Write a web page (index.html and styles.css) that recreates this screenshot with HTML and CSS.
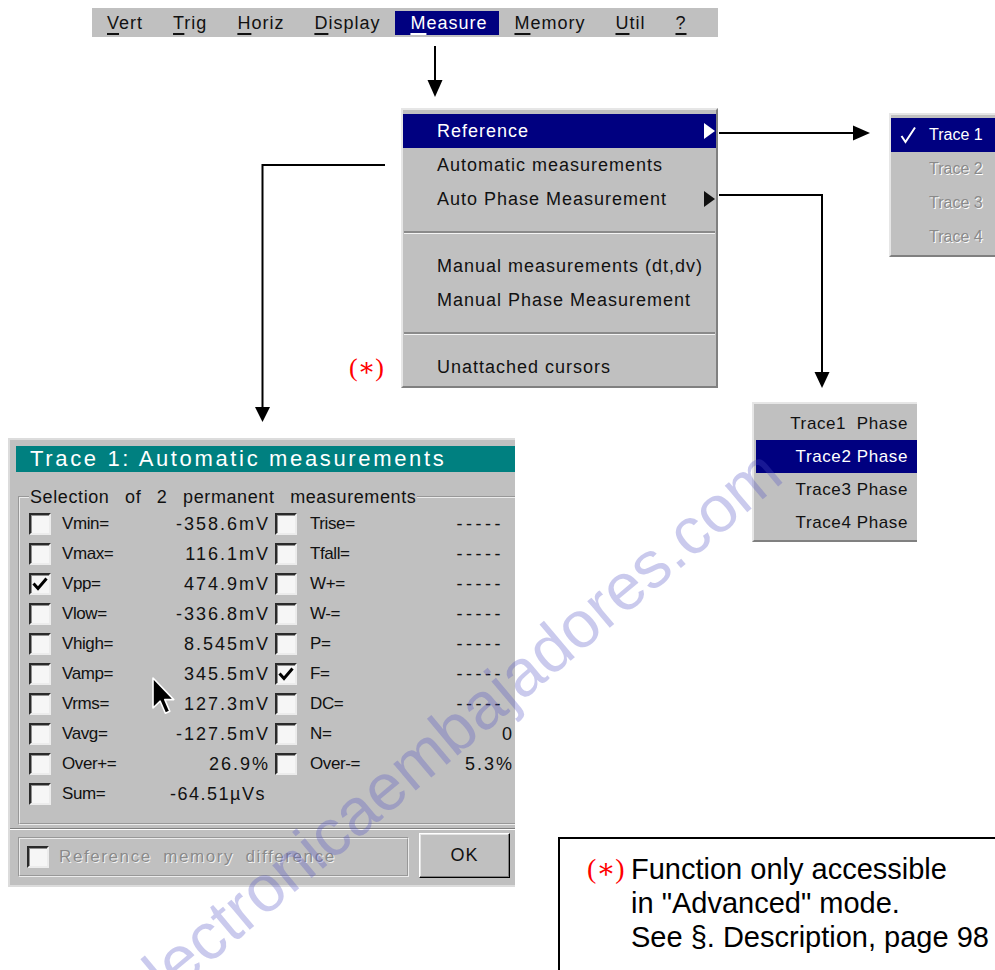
FILE: index.html
```html
<!DOCTYPE html>
<html lang="en">
<head>
<meta charset="utf-8">
<title>Measure menu</title>
<link rel="stylesheet" href="styles.css">
</head>
<body>
<div class="canvas">

  <svg class="wires" width="995" height="970" viewBox="0 0 995 970">
    <g stroke="#000" stroke-width="2" fill="none">
      <path d="M435 46 V82"/>
      <path d="M719 133 H856"/>
      <path d="M719 195 H822 V374"/>
      <path d="M385 165 H262.5 V409"/>
    </g>
    <g fill="#000">
      <polygon points="427.5,80 442.5,80 435,97"/>
      <polygon points="853,125.5 853,140.5 870,133"/>
      <polygon points="814.5,372 829.5,372 822,388"/>
      <polygon points="255,407 270,407 262.5,422"/>
    </g>
  </svg>

  <nav class="menubar">
    <span class="mi"><u>V</u>ert</span>
    <span class="mi"><u>T</u>rig</span>
    <span class="mi"><u>H</u>oriz</span>
    <span class="mi"><u>D</u>isplay</span>
    <span class="mi active"><u>M</u>easure</span>
    <span class="mi"><u>M</u>emory</span>
    <span class="mi"><u>U</u>til</span>
    <span class="mi"><u>?</u></span>
  </nav>

  <div class="dropdown">
    <div class="dd-item sel"><span>Reference</span><span class="tri"></span></div>
    <div class="dd-item"><span>Automatic measurements</span></div>
    <div class="dd-item"><span>Auto Phase Measurement</span><span class="tri"></span></div>
    <div class="dd-sep"></div>
    <div class="dd-item"><span>Manual measurements (dt,dv)</span></div>
    <div class="dd-item"><span>Manual Phase Measurement</span></div>
    <div class="dd-sep"></div>
    <div class="dd-item"><span>Unattached cursors</span></div>
  </div>

  <span class="star">(∗)</span>

  <div class="trace-menu">
    <div class="tm-item sel"><span class="chk"><svg width="18" height="18" viewBox="0 0 18 18"><path d="M1.5 10 L5.5 16 L15 1.5" fill="none" stroke="#fff" stroke-width="2"/></svg></span>Trace 1</div>
    <div class="tm-item dis"><span class="chk"></span>Trace 2</div>
    <div class="tm-item dis"><span class="chk"></span>Trace 3</div>
    <div class="tm-item dis"><span class="chk"></span>Trace 4</div>
  </div>

  <div class="phase-menu">
    <div class="pm-item">Trace1&nbsp; Phase</div>
    <div class="pm-item sel">Trace2 Phase</div>
    <div class="pm-item">Trace3 Phase</div>
    <div class="pm-item">Trace4 Phase</div>
  </div>

  <div class="dialog">
    <div class="dlg-title">Trace 1: Automatic measurements</div>
    <fieldset class="group">
      <legend>Selection of 2 permanent measurements</legend>
      <div class="mrow">
        <span class="cb"></span><span class="cell c1"><span class="lbl">Vmin=</span><span class="val">-358.6mV</span></span>
        <span class="cb c2"></span><span class="cell c2"><span class="lbl">Trise=</span><span class="val dash">-----</span></span>
      </div>
      <div class="mrow">
        <span class="cb"></span><span class="cell c1"><span class="lbl">Vmax=</span><span class="val">116.1mV</span></span>
        <span class="cb c2"></span><span class="cell c2"><span class="lbl">Tfall=</span><span class="val dash">-----</span></span>
      </div>
      <div class="mrow">
        <span class="cb on"><svg width="18" height="18" viewBox="0 0 18 18"><path d="M2.5 8.5 L7 13.5 L15.5 3.5" fill="none" stroke="#000" stroke-width="3"/></svg></span><span class="cell c1"><span class="lbl">Vpp=</span><span class="val">474.9mV</span></span>
        <span class="cb c2"></span><span class="cell c2"><span class="lbl">W+=</span><span class="val dash">-----</span></span>
      </div>
      <div class="mrow">
        <span class="cb"></span><span class="cell c1"><span class="lbl">Vlow=</span><span class="val">-336.8mV</span></span>
        <span class="cb c2"></span><span class="cell c2"><span class="lbl">W-=</span><span class="val dash">-----</span></span>
      </div>
      <div class="mrow">
        <span class="cb"></span><span class="cell c1"><span class="lbl">Vhigh=</span><span class="val">8.545mV</span></span>
        <span class="cb c2"></span><span class="cell c2"><span class="lbl">P=</span><span class="val dash">-----</span></span>
      </div>
      <div class="mrow">
        <span class="cb"></span><span class="cell c1"><span class="lbl">Vamp=</span><span class="val">345.5mV</span></span>
        <span class="cb c2 on"><svg width="18" height="18" viewBox="0 0 18 18"><path d="M2.5 8.5 L7 13.5 L15.5 3.5" fill="none" stroke="#000" stroke-width="3"/></svg></span><span class="cell c2"><span class="lbl">F=</span><span class="val dash">-----</span></span>
      </div>
      <div class="mrow">
        <span class="cb"></span><span class="cell c1"><span class="lbl">Vrms=</span><span class="val">127.3mV</span></span>
        <span class="cb c2"></span><span class="cell c2"><span class="lbl">DC=</span><span class="val dash">-----</span></span>
      </div>
      <div class="mrow">
        <span class="cb"></span><span class="cell c1"><span class="lbl">Vavg=</span><span class="val">-127.5mV</span></span>
        <span class="cb c2"></span><span class="cell c2"><span class="lbl">N=</span><span class="val">0</span></span>
      </div>
      <div class="mrow">
        <span class="cb"></span><span class="cell c1"><span class="lbl">Over+=</span><span class="val">26.9%</span></span>
        <span class="cb c2"></span><span class="cell c2"><span class="lbl">Over-=</span><span class="val">5.3%</span></span>
      </div>
      <div class="mrow">
        <span class="cb"></span><span class="cell c1"><span class="lbl">Sum=</span><span class="val sum">-64.51µVs</span></span>
      </div>
    </fieldset>
    <div class="hsep"></div>
    <div class="dlg-bottom">
      <div class="refbox"><span class="cb"></span><span class="dis-text">Reference memory difference</span></div>
      <div class="ok">OK</div>
    </div>
  </div>

  <svg class="cursor" width="24" height="40" viewBox="0 0 12 20">
    <path d="M1 1 L1 16 L4.6 12.6 L7.2 18.6 L9.4 17.6 L6.9 11.8 L11.4 11.8 Z" fill="#000" stroke="#fff" stroke-width="0.8" stroke-linejoin="round"/>
  </svg>

  <div class="note">
    <span class="mark">(∗)</span>
    <div class="note-lines">
      <div>Function only accessible</div>
      <div>in "Advanced" mode.</div>
      <div>See §. Description, page 98</div>
    </div>
  </div>

  <div class="watermark">electronicaembajadores.com</div>
</div>
</body>
</html>
```
FILE: styles.css
```css
* { box-sizing: border-box; }
html, body { margin: 0; padding: 0; }
body {
  width: 995px;
  height: 970px;
  overflow: hidden;
  background: #fff;
  font-family: "Liberation Sans", Arial, sans-serif;
  color: #000;
}
.canvas { position: relative; width: 995px; height: 970px; overflow: hidden; }

.wires { position: absolute; left: 0; top: 0; pointer-events: none; }

/* menu bar */
.menubar {
  position: absolute; left: 92px; top: 8px;
  width: 626px; height: 29px;
  background: #c0c0c0;
  display: flex; align-items: center;
  font-size: 18px; letter-spacing: 1px;
}
.mi { height: 24px; line-height: 24px; padding: 0 15px; color: #111; }
.mi u { text-decoration-thickness: 2px; text-underline-offset: 4px; }
.mi.active { background: #000080; color: #fff; padding: 0 12px 0 15px; }

/* dropdown */
.dropdown {
  position: absolute; left: 401px; top: 108px;
  width: 317px; height: 280px;
  background: #c0c0c0;
  border: 2px solid; border-color: #e6e6e6 #808080 #808080 #e6e6e6;
  padding: 4px 0 2px;
  font-size: 18px; letter-spacing: 1px; color: #111;
}
.dd-item {
  height: 34px; display: flex; align-items: center; justify-content: space-between;
  padding: 0 1px 0 34px; white-space: nowrap;
}
.dd-item.sel { background: #000080; color: #fff; }
.tri {
  width: 0; height: 0;
  border-top: 8px solid transparent; border-bottom: 8px solid transparent;
  border-left: 11px solid currentColor;
}
.dd-sep { height: 33px; display: flex; align-items: center; padding: 0 1px; }
.dd-sep::before { content: ""; flex: 1; border-top: 2px solid #8a8a8a; border-bottom: 1px solid #f4f4f4; }

.star {
  position: absolute; left: 349px; top: 353px;
  font-family: "Liberation Serif", "DejaVu Serif", serif;
  font-size: 26px; color: #f00; line-height: 30px;
}

/* trace submenu */
.trace-menu {
  position: absolute; left: 889px; top: 113px;
  width: 130px; height: 144px;
  background: #c0c0c0;
  border: 2px solid; border-color: #e6e6e6 #808080 #808080 #e6e6e6;
  padding: 3px 0 1px;
  font-size: 16px;
}
.tm-item { height: 34px; display: flex; align-items: center; padding-left: 9px; white-space: nowrap; }
.tm-item .chk { width: 29px; display: flex; align-items: center; }
.tm-item.sel { background: #000080; color: #fff; }
.tm-item.dis { color: #8a8a8a; text-shadow: 1px 1px 0 #fff; }

/* phase submenu */
.phase-menu {
  position: absolute; left: 752px; top: 402px;
  width: 165px; height: 140px;
  background: #c0c0c0;
  border: 2px solid; border-right: 0; border-color: #e6e6e6 #808080 #808080 #e6e6e6;
  padding: 3px 0 1px 2px;
  font-size: 17px; letter-spacing: 0.6px; color: #111;
}
.pm-item { height: 33px; display: flex; align-items: center; justify-content: flex-end; padding-right: 9px; white-space: nowrap; }
.pm-item.sel { background: #000080; color: #fff; }

/* dialog */
.dialog {
  position: absolute; left: 8px; top: 438px;
  width: 507px; height: 449px;
  background: #c0c0c0;
  border: 2px solid #dcdcdc; border-right: 0;
  overflow: hidden;
  color: #111;
}
.dlg-title {
  margin: 6px 0 0 6px; height: 26px;
  background: #008080; color: #fff;
  font-size: 22px; line-height: 26px; letter-spacing: 2.65px;
  padding-left: 14px; white-space: nowrap;
}
.group {
  margin: 15px 0 0 8px;
  padding: 2px 0 14px 9px;
  border: 2px groove #ececec; border-right: 0;
  min-width: 0;
}
.group legend {
  padding: 0 1px;
  font-size: 18px; line-height: 20px;
  letter-spacing: 0.6px; word-spacing: 10px;
  white-space: nowrap;
}
.mrow { height: 30px; display: flex; align-items: center; }
.cb {
  width: 22px; height: 22px; flex: none;
  background: #f6f6f6;
  border: 2px solid; border-color: #2a2a2a #ececec #ececec #2a2a2a;
  box-shadow: inset 1px 1px 0 #909090;
  display: flex; align-items: center; justify-content: center;
}
.cb svg { display: block; }
.cb.c2 { margin-left: 5px; }
.cell { display: flex; justify-content: space-between; align-items: center; white-space: nowrap; }
.cell.c1 { width: 208px; margin-left: 11px; }
.cell.c2 { width: 204px; margin-left: 13px; }
.lbl { font-size: 17px; letter-spacing: -0.4px; }
.val { font-size: 18px; letter-spacing: 2px; }
.val.sum { margin-right: 4px; letter-spacing: 1.5px; }
.val.dash { margin-right: 10px; letter-spacing: 3.5px; }

.hsep { margin-top: 3px; border-top: 1px solid #808080; border-bottom: 1px solid #fff; }
.dlg-bottom { display: flex; align-items: flex-start; margin-top: 3px; padding-left: 8px; }
.refbox {
  width: 391px; height: 40px; margin-top: 4px;
  border: 2px groove #ececec;
  display: flex; align-items: center; gap: 10px;
  padding-left: 7px;
}
.dis-text {
  font-size: 17px; letter-spacing: 1.6px; word-spacing: 5px;
  color: #8a8a8a; text-shadow: 1px 1px 0 #f4f4f4; white-space: nowrap;
}
.ok {
  margin-left: 10px; width: 91px; height: 45px;
  border: 1px solid; border-color: #fff #000 #000 #fff;
  box-shadow: inset -1px -1px 0 #808080, inset 1px 1px 0 #e4e4e4;
  display: flex; align-items: center; justify-content: center;
  font-size: 18px; letter-spacing: 1px; color: #111;
}

.cursor { position: absolute; left: 151px; top: 676px; }

/* note */
.note {
  position: absolute; left: 558px; top: 837px;
  width: 460px; height: 160px;
  border: 2px solid #000;
  padding: 13px 0 0 27px;
  display: flex;
  font-size: 29px; line-height: 34px;
}
.note .mark {
  width: 44px; flex: none; color: #f00;
  font-family: "Liberation Serif", "DejaVu Serif", serif;
  font-size: 28px;
}
.note-lines { white-space: nowrap; }

/* watermark */
.watermark {
  position: absolute; left: 146px; top: 964px;
  font-size: 66px; line-height: 66px;
  color: rgba(80, 80, 195, 0.3);
  transform: rotate(-40deg); transform-origin: 0 100%;
  white-space: nowrap; pointer-events: none;
}
```
